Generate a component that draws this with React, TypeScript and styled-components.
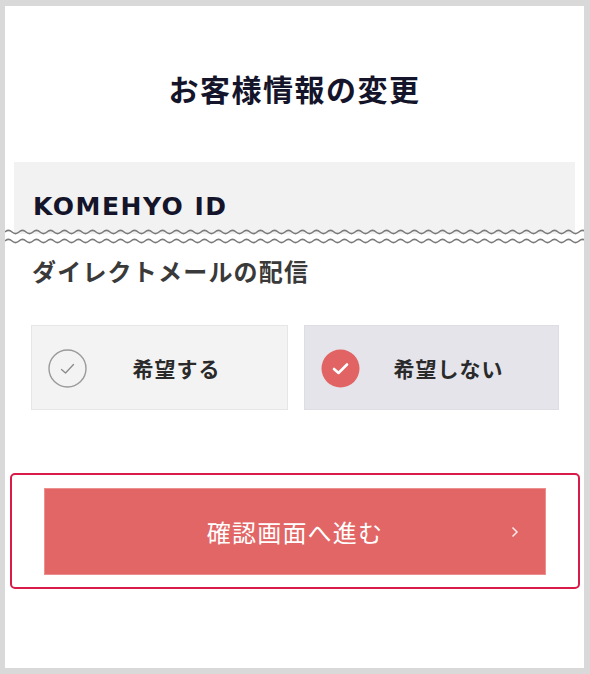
import React from 'react';
import styled, { createGlobalStyle } from 'styled-components';

const GlobalStyle = createGlobalStyle`
    html, body {
        margin: 0;
        padding: 0;
        background: #d9d9d9;
    }
    body {
        font-family: "DejaVu Sans", "Noto Sans CJK JP", sans-serif;
    }
`;

const Panel = styled.div`
    margin: 6px 6px 6px 5px;
    width: 579px;
    height: 662px;
    background: #ffffff;
    display: flex;
    flex-direction: column;
    overflow: hidden;
`;

const Title = styled.h1`
    margin: 62px 0 0;
    text-align: center;
    font-family: "Noto Sans CJK JP", sans-serif;
    font-size: 30px;
    line-height: 40px;
    font-weight: 700;
    letter-spacing: 1.5px;
    color: #14142a;
`;

const IdBox = styled.div`
    margin: 54px 9px 0 9px;
    height: 72px;
    background: #f2f2f2;
    padding: 30px 0 0 19px;
    box-sizing: border-box;
`;

const IdLabel = styled.div`
    font-family: "DejaVu Sans", sans-serif;
    font-size: 25px;
    line-height: 30px;
    font-weight: 700;
    color: #14142a;
    letter-spacing: 1.5px;
`;

const Tear = styled.svg`
    display: block;
    margin-top: -6px;
    position: relative;
`;

const SectionLabel = styled.div`
    margin: 10px 0 0 27px;
    font-family: "Noto Sans CJK JP", sans-serif;
    font-size: 24px;
    line-height: 30px;
    font-weight: 700;
    color: #3a3a3a;
    letter-spacing: 1.2px;
`;

const Options = styled.div`
    margin: 39px 25px 0 26px;
    display: grid;
    grid-template-columns: 257px 255px;
    gap: 16px;
`;

const Option = styled.div<{ checked: boolean }>`
    position: relative;
    height: 85px;
    box-sizing: border-box;
    border: 1px solid ${p => (p.checked ? '#dddde4' : '#e6e6e6')};
    background: ${p => (p.checked ? '#e4e4ea' : '#f3f3f3')};
    display: flex;
    align-items: center;
    justify-content: center;
    padding-left: 34px;
`;

const OptionText = styled.span`
    font-family: "Noto Sans CJK JP", sans-serif;
    font-size: 21px;
    font-weight: 700;
    color: #2a2a2a;
    letter-spacing: 1px;
`;

const CheckMark = styled.svg`
    position: absolute;
    left: 16px;
    top: 23px;
`;

const SubmitFrame = styled.div`
    margin: 63px 4px 0 5px;
    border: 2px solid #d81b48;
    border-radius: 5px;
    padding: 13px 32px 12px;
`;

const SubmitButton = styled.button`
    position: relative;
    width: 100%;
    height: 87px;
    border: 1px solid #eb8f8f;
    background: #e26666;
    color: #ffffff;
    font-family: "Noto Sans CJK JP", sans-serif;
    font-size: 24px;
    font-weight: 400;
    letter-spacing: 1.2px;
    display: flex;
    align-items: center;
    justify-content: center;
    cursor: pointer;
`;

const Chevron = styled.svg`
    position: absolute;
    right: 26px;
    top: 37px;
`;

const wavePath = (y: number, width: number) => {
    let d = `M0 ${y} q3.5 -3.2 7 0`;
    for (let x = 7; x < width; x += 7) d += ' t7 0';
    return d;
};

const CheckIcon = ({ checked }: { checked: boolean }) => (
    <CheckMark width="39" height="39" viewBox="0 0 39 39">
        {checked ? (
            <>
                <circle cx="19.5" cy="19.5" r="19" fill="#e26363" />
                <path d="M13 20 L17.5 24 L26 15.5" fill="none" stroke="#fff" strokeWidth="2.6" strokeLinecap="round" strokeLinejoin="round" />
            </>
        ) : (
            <>
                <circle cx="19.5" cy="19.5" r="18.5" fill="none" stroke="#9a9a9a" strokeWidth="1.4" />
                <path d="M13.5 20.5 L17.5 24 L25.5 15.5" fill="none" stroke="#8a8a8a" strokeWidth="1.3" strokeLinecap="round" strokeLinejoin="round" />
            </>
        )}
    </CheckMark>
);

const App = () => {
    const choices = [
        { label: '希望する', checked: false },
        { label: '希望しない', checked: true },
    ];
    return (
        <>
            <GlobalStyle />
            <Panel>
                <Title>お客様情報の変更</Title>
                <IdBox>
                    <IdLabel>KOMEHYO ID</IdLabel>
                </IdBox>
                <Tear width="579" height="18" viewBox="0 0 579 18">
                    <path d={wavePath(4, 580)} fill="none" stroke="#7a7a7a" strokeWidth="1.5" />
                    <path d={wavePath(13, 580)} fill="none" stroke="#7a7a7a" strokeWidth="1.5" />
                </Tear>
                <SectionLabel>ダイレクトメールの配信</SectionLabel>
                <Options>
                    {choices.map((c, i) => (
                        <Option key={i} checked={c.checked}>
                            <CheckIcon checked={c.checked} />
                            <OptionText>{c.label}</OptionText>
                        </Option>
                    ))}
                </Options>
                <SubmitFrame>
                    <SubmitButton>
                        確認画面へ進む
                        <Chevron width="8" height="12" viewBox="0 0 8 12">
                            <path d="M1.5 1.5 L6 6 L1.5 10.5" fill="none" stroke="#ffffff" strokeWidth="1.5" strokeOpacity="0.85" />
                        </Chevron>
                    </SubmitButton>
                </SubmitFrame>
            </Panel>
        </>
    );
};

export default App;
